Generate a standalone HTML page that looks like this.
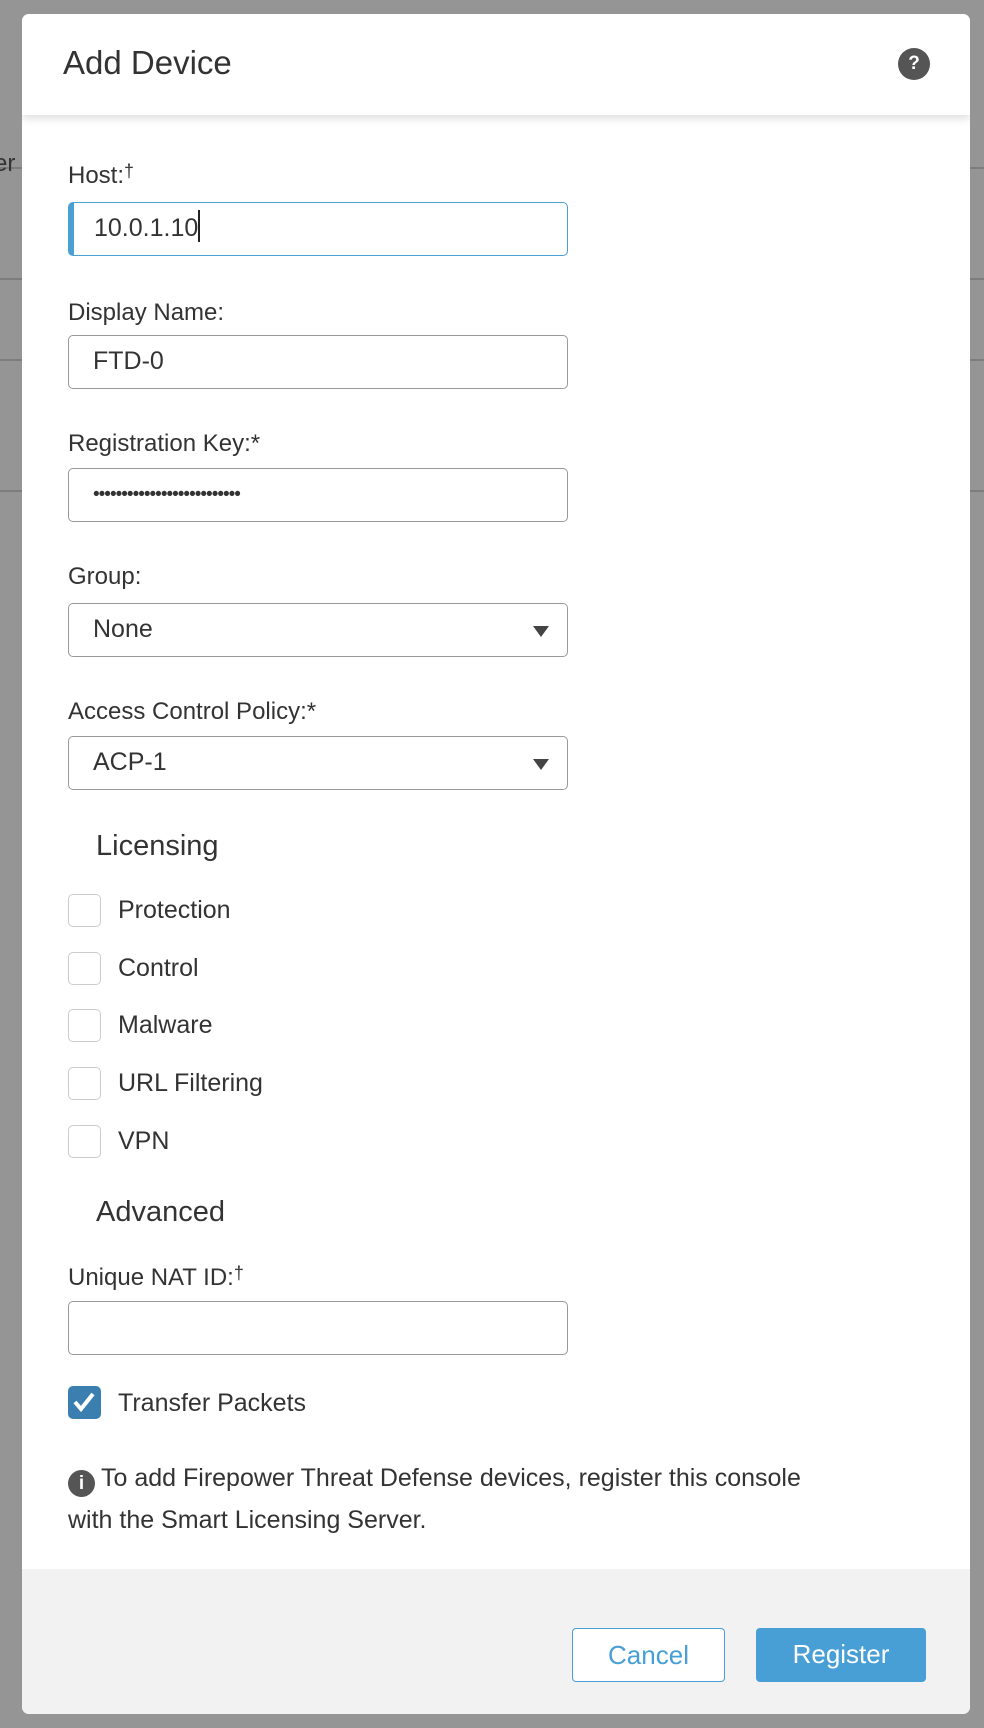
<!DOCTYPE html>
<html><head><style>
*{box-sizing:border-box;margin:0;padding:0}
body{width:984px;height:1728px;background:#959595;font-family:"Liberation Sans",Arial,sans-serif;color:#333;position:relative;overflow:hidden}
.bg-line{position:absolute;left:0;width:984px;height:2px;background:#7d7d7d}
.dlg{position:absolute;left:22px;top:14px;width:948px;height:1700px;background:#fff;border-radius:7px;overflow:hidden}
.hdr{position:absolute;left:0;top:0;width:100%;height:101px;background:#fff;box-shadow:0 4px 8px rgba(0,0,0,.12)}
.title{position:absolute;left:41px;top:30px;font-size:33px;color:#333}
.help{position:absolute;left:876px;top:34px;width:32px;height:32px;border-radius:50%;background:#555;color:#fff;font-size:19px;font-weight:bold;text-align:center;line-height:32px}
.a{position:absolute}
.lbl{position:absolute;left:46px;font-size:24px;color:#333}
.inp{position:absolute;left:46px;width:500px;height:54px;border:1.5px solid #999;border-radius:5px;font-size:25px;padding-left:24px;line-height:51px;color:#333}
.arrow{position:absolute;right:18px;top:22px;width:0;height:0;border-left:8px solid transparent;border-right:8px solid transparent;border-top:11px solid #444}
.h2{position:absolute;left:74px;font-size:29px;color:#333}
.cb{position:absolute;left:46px;width:33px;height:33px;border:1.5px solid #ccc;border-radius:5px}
.cbl{position:absolute;left:96px;font-size:25px;color:#333}
.ftr{position:absolute;left:0;top:1555px;width:100%;height:145px;background:#f2f2f2}
.btn{position:absolute;top:59px;height:54px;border-radius:4px;font-size:26px;text-align:center;line-height:52px}
</style></head><body>
<div class="bg-line" style="top:167px"></div>
<div class="bg-line" style="top:278px"></div>
<div class="bg-line" style="top:359px"></div>
<div class="bg-line" style="top:490px"></div>
<div class="a" style="left:-6px;top:150px;font-size:24px;color:#333">er</div>
<div class="dlg">
 <div class="hdr"><div class="title">Add Device</div><div class="help">?</div></div>
 <div class="lbl" style="top:147px">Host:<span style="font-size:18px;vertical-align:6px">†</span></div>
 <div class="inp" style="top:188px;border-color:#4a9fd5;border-left:6px solid #4a9fd5;padding-left:20px">10.0.1.10<span style="display:inline-block;width:1.5px;height:32px;background:#222;vertical-align:-6px"></span></div>
 <div class="lbl" style="top:285px">Display Name:</div>
 <div class="inp" style="top:321px">FTD-0</div>
 <div class="lbl" style="top:416px">Registration Key:*</div>
 <div class="inp" style="top:454px;letter-spacing:-1px;font-size:19px">••••••••••••••••••••••••••</div>
 <div class="lbl" style="top:549px">Group:</div>
 <div class="inp" style="top:589px">None<div class="arrow"></div></div>
 <div class="lbl" style="top:684px">Access Control Policy:*</div>
 <div class="inp" style="top:722px">ACP-1<div class="arrow"></div></div>
 <div class="h2" style="top:816px">Licensing</div>
 <div class="cb" style="top:880px"></div><div class="cbl" style="top:882px">Protection</div>
 <div class="cb" style="top:938px"></div><div class="cbl" style="top:940px">Control</div>
 <div class="cb" style="top:995px"></div><div class="cbl" style="top:997px">Malware</div>
 <div class="cb" style="top:1053px"></div><div class="cbl" style="top:1055px">URL Filtering</div>
 <div class="cb" style="top:1111px"></div><div class="cbl" style="top:1113px">VPN</div>
 <div class="h2" style="top:1182px">Advanced</div>
 <div class="lbl" style="top:1249px">Unique NAT ID:<span style="font-size:18px;vertical-align:6px">†</span></div>
 <div class="inp" style="top:1287px"></div>
 <div class="cb" style="top:1372px;background:#3a7fb0;border-color:#3a7fb0"><svg width="30" height="30" viewBox="0 0 30 30" style="position:absolute;left:0;top:0"><path d="M6 15 L12 22 L24 7" stroke="#fff" stroke-width="4" fill="none"/></svg></div>
 <div class="cbl" style="top:1375px">Transfer Packets</div>
 <div class="a" style="left:46px;top:1443px;font-size:25px;line-height:42px;width:740px;color:#333"><span style="display:inline-block;width:27px;height:27px;border-radius:50%;background:#555;color:#fff;font-size:19px;font-weight:bold;text-align:center;line-height:27px;vertical-align:-3px;margin-right:6px">i</span>To add Firepower Threat Defense devices, register this console with the Smart Licensing Server.</div>
 <div class="ftr">
  <div class="btn" style="left:550px;width:153px;border:1.5px solid #479fd6;color:#479fd6;background:#fff">Cancel</div>
  <div class="btn" style="left:734px;width:170px;background:#479fd6;color:#fff">Register</div>
 </div>
</div>
</body></html>
